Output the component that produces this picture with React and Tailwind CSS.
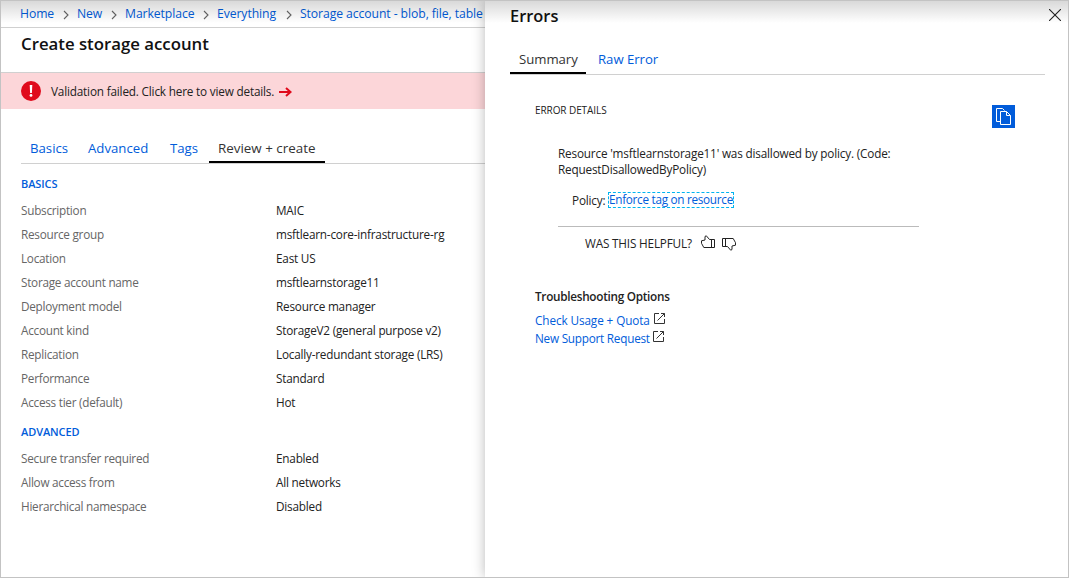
import React from "react";

const basics = [
  ["Subscription", "MAIC"],
  ["Resource group", "msftlearn-core-infrastructure-rg"],
  ["Location", "East US"],
  ["Storage account name", "msftlearnstorage11"],
  ["Deployment model", "Resource manager"],
  ["Account kind", "StorageV2 (general purpose v2)"],
  ["Replication", "Locally-redundant storage (LRS)"],
  ["Performance", "Standard"],
  ["Access tier (default)", "Hot"],
];

const advanced = [
  ["Secure transfer required", "Enabled"],
  ["Allow access from", "All networks"],
  ["Hierarchical namespace", "Disabled"],
];

function Rows({ items }) {
  return (
    <dl>
      {items.map(([label, value]) => (
        <div key={label} className="flex h-6 items-center text-[11.75px]">
          <dt className="w-[255px] tracking-[-0.26px] text-[#666]">{label}</dt>
          <dd className="tracking-[-0.21px] text-[#222]">{value}</dd>
        </div>
      ))}
    </dl>
  );
}

function Chevron() {
  return (
    <svg width="6" height="10" viewBox="0 0 6 10" fill="none" stroke="#666" strokeWidth="1.1" className="shrink-0">
      <path d="M1 1l4 4-4 4" />
    </svg>
  );
}

function External() {
  return (
    <svg width="11" height="11" viewBox="0 0 11 11" fill="none" stroke="#333" className="mb-[5px]">
      <path d="M5 .5H.5v10h10V6M7 .5h3.500v3.500M10.500.5L3.500 7.500" />
    </svg>
  );
}

function Thumb({ className }) {
  return (
    <svg width="14" height="13" viewBox="0 0 14 13" fill="none" stroke="#222" strokeLinejoin="round" className={className}>
      <path d="M.5 5.800L4 5V1.500L5.300.8 8.500 4.500h5v8H2.800L.5 8.300zM10.500 4.500v8" />
    </svg>
  );
}

export default function App() {
  return (
    <div className="relative flex h-[578px] w-[1069px] overflow-hidden border border-[#c3c3c3] bg-white font-['Open_Sans','Noto_Sans',sans-serif] whitespace-nowrap">
      <main className="w-[484px] shrink-0 overflow-hidden">
        <nav className="flex h-[27px] items-center border-b border-[#d0d0d0] pt-px pl-[19px] text-[12.2px] tracking-[-0.08px] text-[#015cda]">
          <span className="w-[43px] shrink-0">Home</span><Chevron />
          <span className="ml-2 w-[34px] shrink-0">New</span><Chevron />
          <span className="ml-2 w-[78px] shrink-0">Marketplace</span><Chevron />
          <span className="ml-2 w-[69px] shrink-0">Everything</span><Chevron />
          <span className="ml-2 shrink-0">Storage account - blob, file, table</span>
        </nav>
        <h1 className="h-[44px] pt-1 pl-5 text-[16.8px] leading-6 font-semibold text-[#111]">Create storage account</h1>
        <div className="flex h-[37px] items-center border-t border-[#d0d0d0] bg-[#fcd6d9] pl-5 text-[11.75px] tracking-[-0.18px] text-[#222]">
          <svg width="20" height="20" viewBox="0 0 20 20">
            <circle cx="10" cy="10" r="10" fill="#e00b1c" />
            <path d="M8.7 4h2.6l-.4 8H9.1z" fill="#fff" />
            <circle cx="10" cy="14.4" r="1.4" fill="#fff" />
          </svg>
          <span className="ml-[10px] pt-px">Validation failed. Click here to view details.</span>
          <svg width="13" height="10" viewBox="0 0 13 10" fill="none" stroke="#e00b1c" strokeWidth="2" className="mt-px ml-[5px]">
            <path d="M0 5h11M7 1l4.5 4L7 9" />
          </svg>
        </div>
        <div className="mt-[26px] ml-5 flex h-[29px] border-b border-[#d0d0d0] text-[13.2px] text-[#015cda]">
          <span className="w-[67px] pl-[9px] leading-[26px]">Basics</span>
          <span className="w-[82px] leading-[26px]">Advanced</span>
          <span className="w-[39px] leading-[26px]">Tags</span>
          <span className="h-[28px] w-[116px] border-b-2 border-black pl-[9px] text-[13.4px] leading-[26px] text-[#333]">Review + create</span>
        </div>
        <div className="pl-5">
          <h2 className="h-[35px] pt-3 text-[11px] leading-4 font-semibold tracking-[-0.1px] text-[#015cda]">BASICS</h2>
          <Rows items={basics} />
          <h2 className="h-8 pt-[9px] text-[11px] leading-4 font-semibold tracking-[-0.1px] text-[#015cda]">ADVANCED</h2>
          <Rows items={advanced} />
        </div>
      </main>
      <aside className="relative w-[583px] shrink-0 bg-white pl-[25px] shadow-[0_0_12px_rgba(0,0,0,0.28)]">
        <header className="flex h-[44px] justify-between pt-[3px] pr-[7px]">
          <h2 className="text-[16.4px] leading-6 font-semibold text-[#111]">Errors</h2>
          <svg width="12" height="12" viewBox="0 0 12 12" fill="none" stroke="#222" strokeWidth="1.1" className="mt-[5px]">
            <path d="M0 0l12 12M12 0L0 12" />
          </svg>
        </header>
        <div className="flex h-[30px] w-[535px] border-b border-[#d0d0d0] text-[13.2px] tracking-[-0.04px]">
          <span className="h-[29px] w-[76px] border-b-2 border-black pl-[9px] leading-[29px] text-[#333]">Summary</span>
          <span className="ml-3 leading-[29px] text-[#015cda]">Raw Error</span>
        </div>
        <div className="flex h-[70px] w-[505px] justify-between pt-[29px] pl-[25px]">
          <h3 className="text-[10px] leading-[12px] tracking-[-0.08px] text-[#222]">ERROR DETAILS</h3>
          <svg width="23" height="23" viewBox="0 0 23 23" fill="none" stroke="#fff" className="mt-px">
            <path fill="#015cda" stroke="none" d="M0 0h23v23H0z" />
            <path d="M8.500 16.500h-4v-13h6l2 2M8.500 6.500h6l4 4v9h-10zM14.500 6.500v4h4" />
          </svg>
        </div>
        <div className="pl-12 text-[11.75px] leading-4 tracking-[-0.18px] text-[#222]">
          <p>Resource 'msftlearnstorage11' was disallowed by policy. (Code:<br />RequestDisallowedByPolicy)</p>
          <p className="mt-[14px] flex h-[18px] items-center pl-[14px]">
            <span className="w-9">Policy:</span>
            <a className="h-4 w-[126px] border border-dashed border-[#00b4f0] leading-[13px] tracking-[-0.29px] text-[#015cda]">Enforce tag on resource</a>
          </p>
          <div className="mt-[17px] flex w-[361px] border-t border-[#bbb] pt-2 pl-[27px]">
            <span className="w-[116px]">WAS THIS HELPFUL?</span>
            <Thumb />
            <Thumb className="mt-[3px] ml-[7px] rotate-180" />
          </div>
        </div>
        <section className="mt-[37px] pl-[25px] text-[11.75px] tracking-[-0.2px]">
          <h3 className="mb-2 leading-4 font-semibold tracking-[-0.28px] text-[#222]">Troubleshooting Options</h3>
          <a className="flex h-[18px] items-center gap-1 text-[#015cda]"><span className="tracking-[-0.1px]">Check Usage + Quota</span><External /></a>
          <a className="flex h-[18px] items-center gap-[3px] text-[#015cda]"><span className="tracking-[-0.24px]">New Support Request</span><External /></a>
        </section>
      </aside>
      <div className="pointer-events-none absolute inset-x-0 top-0 h-[22px] bg-gradient-to-b from-black/15 to-transparent" />
    </div>
  );
}
